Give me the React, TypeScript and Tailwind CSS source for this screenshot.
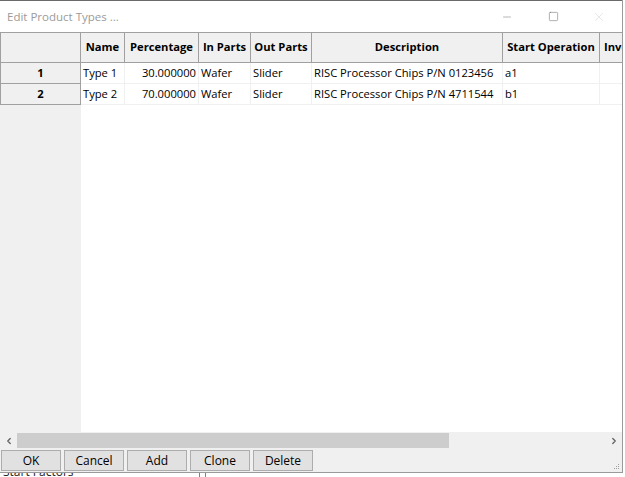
import { Minus, Square, X, ChevronLeft, ChevronRight } from 'lucide-react';

const columns = [
  { key: 'name', label: 'Name', w: 'w-[44px]', right: false },
  { key: 'pct', label: 'Percentage', w: 'w-[74px]', right: true },
  { key: 'in', label: 'In Parts', w: 'w-[52px]', right: false },
  { key: 'out', label: 'Out Parts', w: 'w-[61px]', right: false },
  { key: 'desc', label: 'Description', w: 'w-[191px]', right: false },
  { key: 'start', label: 'Start Operation', w: 'w-[97px]', right: false },
  { key: 'inv', label: 'Inventory', w: 'w-[80px]', right: false },
];

const rows: Record<string, string>[] = [
  { name: 'Type 1', pct: '30.000000', in: 'Wafer', out: 'Slider', desc: 'RISC Processor Chips P/N 0123456', start: 'a1', inv: '' },
  { name: 'Type 2', pct: '70.000000', in: 'Wafer', out: 'Slider', desc: 'RISC Processor Chips P/N 4711544', start: 'b1', inv: '' },
];

const buttons = ['OK', 'Cancel', 'Add', 'Clone', 'Delete'];

export default function App() {
  return (
    <div
      className="w-[625px] h-[477px] bg-white overflow-hidden text-[11.2px] text-black"
      style={{ fontFamily: '"Open Sans", "Noto Sans", Arial, sans-serif' }}
    >
      <div className="w-[623px] h-[473px] flex flex-col border-r border-b border-[#9a9a9a]">
        {/* Title bar */}
        <div className="h-[32px] flex items-center shrink-0 border-t border-[#6a6a6a]">
          <span className="pl-[7px] flex-1 text-[11.5px] text-[#9b9b9b]">Edit Product Types ...</span>
          <div className="w-[46px] flex justify-center">
            <Minus className="w-[12px] h-[12px] text-[#6e6e6e]" strokeWidth={1} />
          </div>
          <div className="w-[46px] flex justify-center">
            <Square className="w-[11px] h-[11px] text-[#6e6e6e]" strokeWidth={1.2} />
          </div>
          <div className="w-[46px] flex justify-center">
            <X className="w-[14px] h-[14px] text-[#d4d4d4]" strokeWidth={1} />
          </div>
        </div>

        {/* Grid */}
        <div className="flex-1 flex min-h-0">
          <div className="w-[81px] shrink-0 bg-[#f0f0f0] flex flex-col">
            <div className="h-[31px] border border-[#a0a0a0] bg-[#f0f0f0]" />
            {rows.map((_, i) => (
              <div
                key={i}
                className="h-[21px] border-x border-b border-[#a0a0a0] flex items-center justify-center font-bold"
              >
                {i + 1}
              </div>
            ))}
          </div>
          <div className="flex-1 overflow-hidden">
            <div className="flex h-[31px] border-y border-[#a0a0a0] bg-[#f0f0f0] w-max">
              {columns.map((c) => (
                <div
                  key={c.key}
                  className={`${c.w} shrink-0 border-r border-[#a0a0a0] flex items-center justify-center font-bold whitespace-nowrap overflow-hidden`}
                >
                  {c.key === 'inv' ? <span className="pl-[4px] w-full text-left">Inventory</span> : c.label}
                </div>
              ))}
            </div>
            {rows.map((r, i) => (
              <div key={i} className="flex h-[21px] border-b border-[#f0f0f0] w-max">
                {columns.map((c) => (
                  <div
                    key={c.key}
                    className={`${c.w} shrink-0 border-r border-[#f0f0f0] px-[2px] flex items-center whitespace-nowrap overflow-hidden ${c.right ? 'justify-end' : ''}`}
                  >
                    {r[c.key]}
                  </div>
                ))}
              </div>
            ))}
          </div>
        </div>

        {/* Horizontal scrollbar */}
        <div className="h-[17px] shrink-0 bg-[#f0f0f0] flex items-center">
          <div className="w-[17px] flex justify-center">
            <ChevronLeft className="w-[10px] h-[10px] text-[#606060]" strokeWidth={3} />
          </div>
          <div className="flex-1 h-full py-[1px] pr-[156px]">
            <div className="h-full bg-[#cdcdcd]" />
          </div>
          <div className="w-[17px] flex justify-center">
            <ChevronRight className="w-[10px] h-[10px] text-[#606060]" strokeWidth={3} />
          </div>
        </div>

        {/* Buttons */}
        <div className="h-[23px] shrink-0 bg-[#f0f0f0] flex items-start gap-[3px] pl-[1px] pt-[1px] relative">
          {buttons.map((b) => (
            <button
              key={b}
              className="w-[60px] h-[21px] bg-[#e1e1e1] border border-[#adadad] text-[12px] leading-none"
            >
              {b}
            </button>
          ))}
          <div className="absolute right-[3px] bottom-[3px] grid grid-cols-3 gap-[1px]">
            {[0, 0, 1, 0, 1, 1, 1, 1, 1].map((v, i) => (
              <div key={i} className={`w-[1px] h-[1px] ${v ? 'bg-[#a0a0a0]' : ''}`} />
            ))}
          </div>
        </div>
      </div>

      {/* Background window peeking below */}
      <div className="h-[4px] overflow-hidden relative">
        <div className="absolute left-[3px] -top-[8px] text-[12px] leading-[14px] text-[#222]">Start Factors</div>
        <div className="absolute left-[199px] top-0 w-[1px] h-full bg-[#808080]" />
        <div className="absolute left-[205px] top-0 w-[1px] h-full bg-[#808080]" />
      </div>
    </div>
  );
}
